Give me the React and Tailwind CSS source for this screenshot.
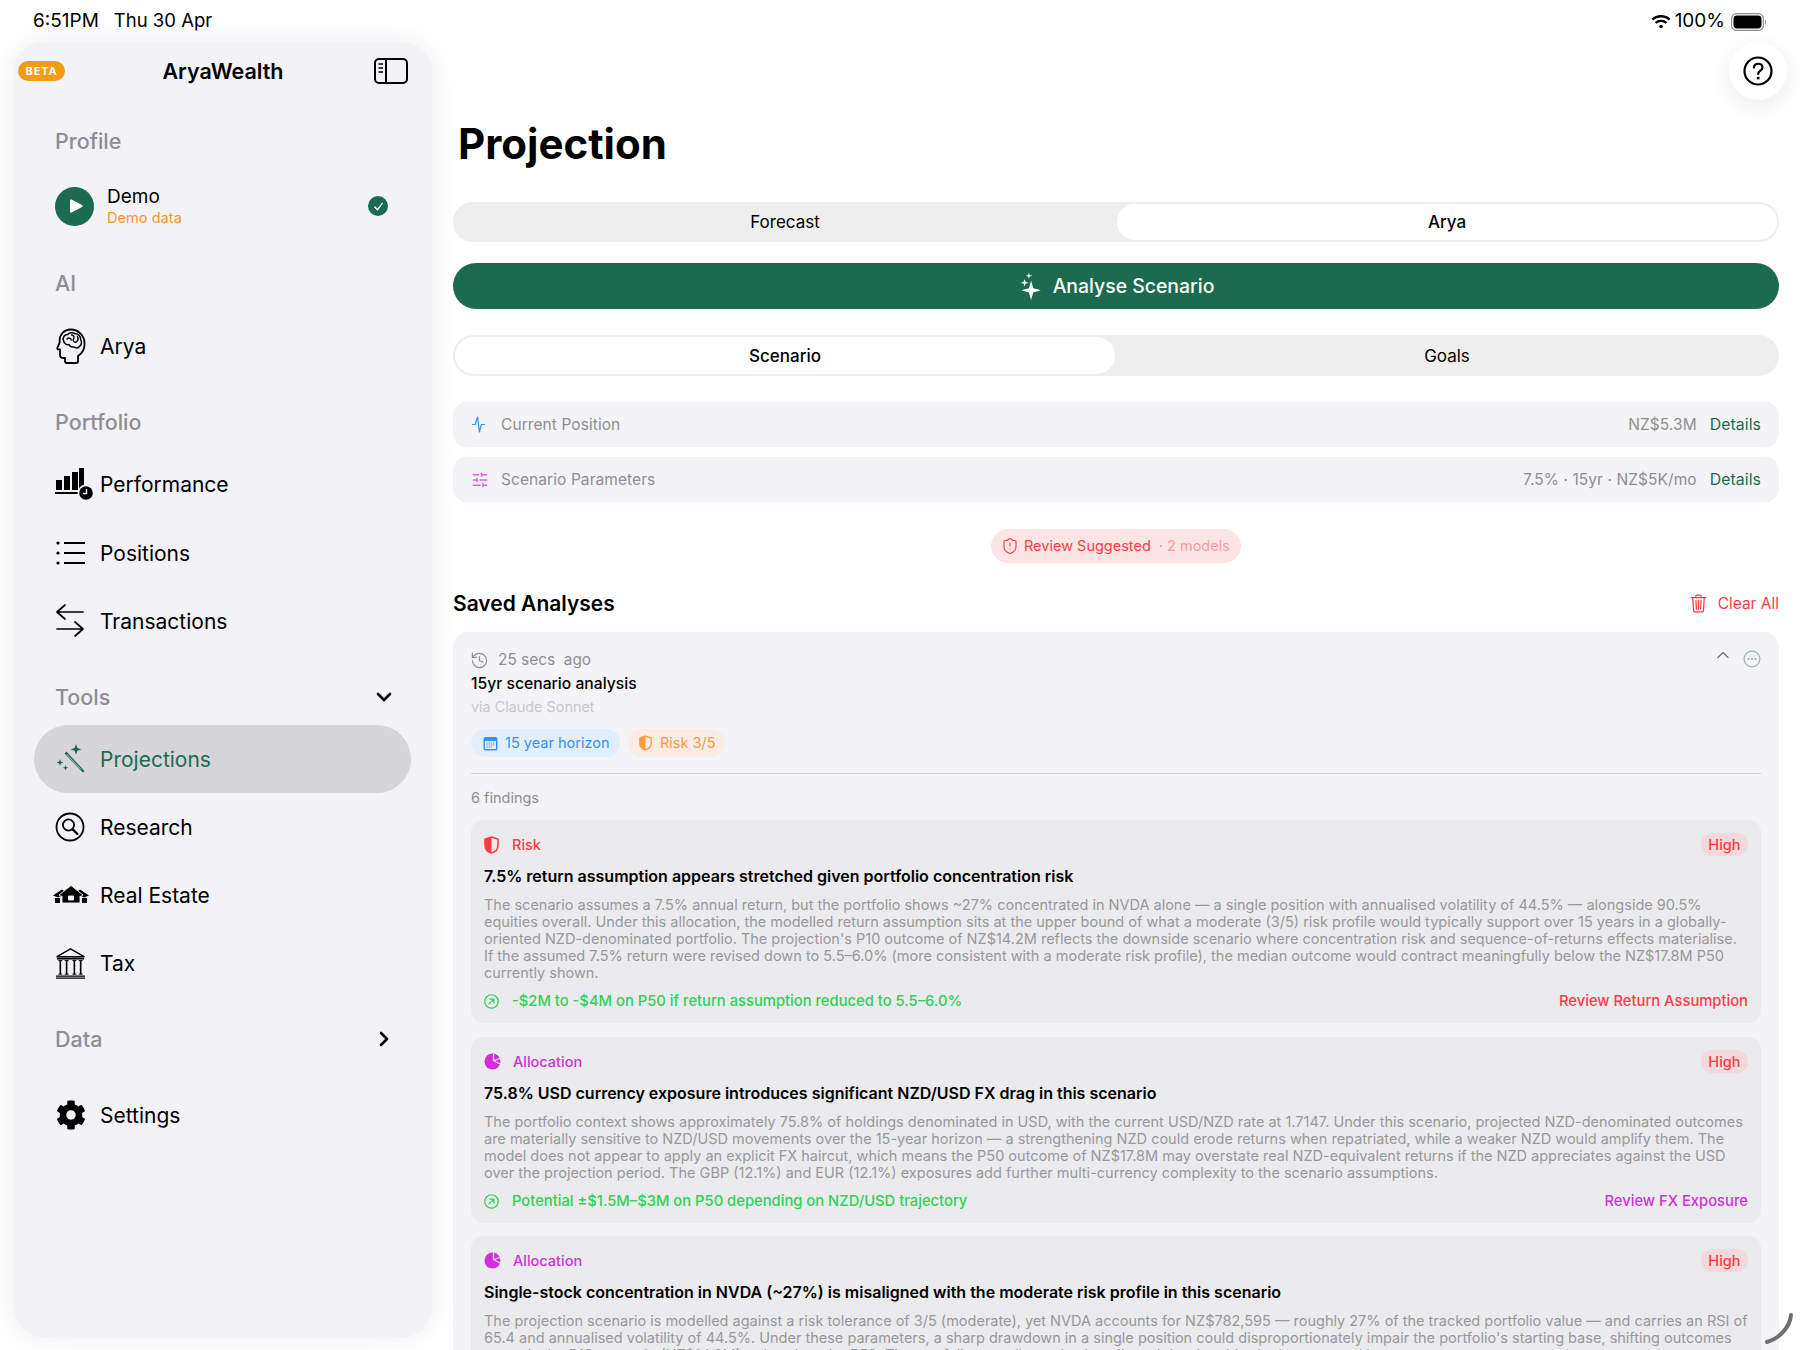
import { ChevronDown, ChevronRight, ChevronUp, History, ShieldAlert, SlidersHorizontal } from 'lucide-react';
import { FaCog } from 'react-icons/fa';

const findings = [
  {
    kind: 'Risk',
    color: 'text-[#ff3b47]',
    icon: <HalfShield className="w-[15px] h-[18px] text-[#ff3b47]" />,
    gap: 'ml-[13px]',
    title: '7.5% return assumption appears stretched given portfolio concentration risk',
    body: [
      'The scenario assumes a 7.5% annual return, but the portfolio shows ~27% concentrated in NVDA alone — a single position with annualised volatility of 44.5% — alongside 90.5%',
      'equities overall. Under this allocation, the modelled return assumption sits at the upper bound of what a moderate (3/5) risk profile would typically support over 15 years in a globally-',
      "oriented NZD-denominated portfolio. The projection's P10 outcome of NZ$14.2M reflects the downside scenario where concentration risk and sequence-of-returns effects materialise.",
      'If the assumed 7.5% return were revised down to 5.5–6.0% (more consistent with a moderate risk profile), the median outcome would contract meaningfully below the NZ$17.8M P50',
      'currently shown.',
    ],
    impact: '-$2M to -$4M on P50 if return assumption reduced to 5.5–6.0%',
    action: 'Review Return Assumption',
  },
  {
    kind: 'Allocation',
    color: 'text-[#d02fe0]',
    icon: <PieFilled />,
    gap: 'ml-[12px]',
    title: '75.8% USD currency exposure introduces significant NZD/USD FX drag in this scenario',
    body: [
      'The portfolio context shows approximately 75.8% of holdings denominated in USD, with the current USD/NZD rate at 1.7147. Under this scenario, projected NZD-denominated outcomes',
      'are materially sensitive to NZD/USD movements over the 15-year horizon — a strengthening NZD could erode returns when repatriated, while a weaker NZD would amplify them. The',
      'model does not appear to apply an explicit FX haircut, which means the P50 outcome of NZ$17.8M may overstate real NZD-equivalent returns if the NZD appreciates against the USD',
      'over the projection period. The GBP (12.1%) and EUR (12.1%) exposures add further multi-currency complexity to the scenario assumptions.',
    ],
    impact: 'Potential ±$1.5M–$3M on P50 depending on NZD/USD trajectory',
    action: 'Review FX Exposure',
  },
  {
    kind: 'Allocation',
    color: 'text-[#d02fe0]',
    icon: <PieFilled />,
    gap: 'ml-[12px]',
    title: 'Single-stock concentration in NVDA (~27%) is misaligned with the moderate risk profile in this scenario',
    body: [
      'The projection scenario is modelled against a risk tolerance of 3/5 (moderate), yet NVDA accounts for NZ$782,595 — roughly 27% of the tracked portfolio value — and carries an RSI of',
      "65.4 and annualised volatility of 44.5%. Under these parameters, a sharp drawdown in a single position could disproportionately impair the portfolio's starting base, shifting outcomes",
      'towards the P10 scenario (NZ$14.2M) rather than the P50. The portfolio overall remains heavily weighted to this single name and its sector.',
    ],
  },
];

function HalfShield({ className }) {
  return (
    <svg viewBox="0 0 15 18" className={className} fill="none">
      <path d="M7.5 1 L14 3.2 V9 C14 13 11 16 7.5 17 C4 16 1 13 1 9 V3.2 Z" stroke="currentColor" strokeWidth="1.6" strokeLinejoin="round" />
      <path d="M7.5 1 L1 3.2 V9 C1 13 4 16 7.5 17 Z" fill="currentColor" />
    </svg>
  );
}

function PieFilled() {
  return (
    <svg viewBox="0 0 17 17" className="w-[17px] h-[17px]">
      <circle cx="8.5" cy="8.5" r="8" fill="#d02fe0" />
      <path d="M9.5 1 L9.5 7.5 L16 5.5 M9.5 7.5 L16 11" stroke="#ebebed" strokeWidth="1.2" fill="none" />
    </svg>
  );
}

function BrainHead() {
  return (
    <svg viewBox="0 0 30 36" className="w-[30px] h-[36px]" fill="none" stroke="#000" strokeWidth="1.8" strokeLinejoin="round" strokeLinecap="round">
      <path d="M9 30 V33 C9 34.2 10 35 11 35 H20 C21.2 35 22 34.2 22 33 V28 C26 25.5 28.6 21.4 28.6 16 C28.6 7.6 22.4 1.5 14.8 1.5 C8 1.5 3.6 6.6 3.6 12.4 V14.6 L1.4 19.6 C1 20.6 1.6 21.4 2.6 21.4 H4 V26.4 C4 28.6 5.4 30 7.4 30 Z" />
      <path d="M7.6 13 C6.2 9.6 8.6 6.4 11.6 6.6 C13 4.6 17 4.2 19 5.8 C22.4 5.6 25 8.6 24.6 11.6 C26.4 14 25.4 17.4 23.4 18.4 C22 20 19.6 20.2 18 19 C15.6 19.4 13.6 18.2 13 16.6 C10.6 17.2 8.2 15.6 7.6 13 Z" strokeWidth="1.5" />
      <path d="M11 11 C12.6 9.4 14.8 10 15.4 12 M15.6 7 C18 7.2 18.6 9.4 17.4 11.4 C16.6 13 18.4 14.8 20.4 14 M21.4 8.4 C22.4 10 22.2 12 21 13.4" strokeWidth="1.4" />
    </svg>
  );
}

function PerfIcon() {
  return (
    <svg viewBox="0 0 40 34" className="w-[40px] h-[34px] -ml-px">
      <rect x="1" y="13" width="6" height="10" />
      <rect x="9" y="9" width="6" height="14" />
      <rect x="17" y="5" width="6" height="18" />
      <rect x="24" y="1" width="5" height="22" />
      <rect x="0" y="25" width="23" height="2" />
      <circle cx="31" cy="26" r="8.5" fill="#f2f2f7" />
      <circle cx="31" cy="26" r="6.8" />
      <path d="M31.5 22 V26.5 H28" stroke="#f2f2f7" strokeWidth="1.4" fill="none" />
    </svg>
  );
}

function ListIcon() {
  return (
    <svg viewBox="0 0 32 26" className="w-[32px] h-[26px] -ml-px" stroke="#000" strokeWidth="1.8">
      <circle cx="3" cy="3" r="1.6" stroke="none" />
      <circle cx="3" cy="13" r="1.6" stroke="none" />
      <circle cx="3" cy="23" r="1.6" stroke="none" />
      <path d="M9 3 H30 M9 13 H30 M9 23 H30" />
    </svg>
  );
}

function SwapIcon() {
  return (
    <svg viewBox="0 0 30 36" className="w-[30px] h-[36px] -ml-px" fill="none" stroke="#000" strokeWidth="1.7" strokeLinecap="round" strokeLinejoin="round">
      <path d="M2 9 H28 M10 2 L2 9 L10 16" />
      <path d="M2 26 H28 M20 19 L28 26 L20 33" />
    </svg>
  );
}

function WandIcon() {
  return (
    <svg viewBox="0 0 30 32" className="w-[30px] h-[32px]" fill="#1c6b51">
      <path d="M8.5 10.5 L10.5 8.5 L28 27.5 C28.6 28.6 27.6 29.8 26.3 29 Z" />
      <path d="M10.5 11 L25 26.5" stroke="#d4d4d8" strokeWidth="0.8" />
      <path d="M20 1 L21.4 5 L25.4 6.4 L21.4 7.8 L20 11.8 L18.6 7.8 L14.6 6.4 L18.6 5 Z" />
      <path d="M4 16 L4.9 18.6 L7.5 19.5 L4.9 20.4 L4 23 L3.1 20.4 L0.5 19.5 L3.1 18.6 Z" />
      <path d="M9.5 22 L10.2 24 L12.2 24.7 L10.2 25.4 L9.5 27.4 L8.8 25.4 L6.8 24.7 L8.8 24 Z" />
    </svg>
  );
}

function SearchRing() {
  return (
    <svg viewBox="0 0 30 30" className="w-[30px] h-[30px] -ml-px" fill="none" stroke="#000" strokeWidth="1.8" strokeLinecap="round">
      <circle cx="15" cy="15" r="13.5" />
      <circle cx="13.5" cy="13" r="5.6" />
      <path d="M17.8 17.4 L22.4 22" strokeWidth="2.2" />
    </svg>
  );
}

function HomesIcon() {
  return (
    <svg viewBox="0 0 36 20" className="w-[36px] h-[20px] -ml-[3px]">
      <path d="M0 10.5 L9 4.5 L14 8 L5 12.5 Z" />
      <path d="M36 10.5 L27 4.5 L22 8 L31 12.5 Z" />
      <path d="M2 13 H7 V18 H2 Z M29 13 H34 V18 H29 Z" />
      <path fillRule="evenodd" d="M18 0.5 L30 10 L27.6 11.4 L27 11 V18 H9 V11 L8.4 11.4 L6 10 Z M15.5 11 V15 H20.5 V11 Z" stroke="#f2f2f7" strokeWidth="0.9" />
    </svg>
  );
}

function BankIcon() {
  return (
    <svg viewBox="0 0 32 32" className="w-[31px] h-[31px] -ml-px" fill="none" stroke="#000" strokeWidth="1.4">
      <path d="M16 1 L30 9 H2 Z" strokeWidth="1.5" strokeLinejoin="round" />
      <path d="M2 11 H30" strokeWidth="1.8" />
      <path d="M5.5 13 V27 M12 13 V27 M20 13 V27 M26.5 13 V27" strokeWidth="1.7" />
      <path d="M3.5 13 H7.5 M10 13 H14 M18 13 H22 M24.5 13 H28.5 M3.5 27 H7.5 M10 27 H14 M18 27 H22 M24.5 27 H28.5" strokeWidth="1" />
      <path d="M1 29 H31 M1 31 H31" strokeWidth="1.3" />
    </svg>
  );
}

function SectionLabel({ children, className = '', right }) {
  return (
    <div className={`flex items-center justify-between h-[40px] pl-[41px] pr-[36px] ${className}`}>
      <span className="text-[21.5px] font-medium text-[#8e8e93]">{children}</span>
      {right}
    </div>
  );
}

function NavRow({ icon, label, active }) {
  return (
    <div className={`flex items-center h-[68px] ml-[20px] mr-[21px] pl-[22px] rounded-full ${active ? 'bg-[#d5d5da] text-[#1c6b51]' : 'text-black'}`}>
      <div className="w-[44px] flex items-center">{icon}</div>
      <span className="pt-[2px] text-[21px]">{label}</span>
    </div>
  );
}

function Sidebar() {
  return (
    <aside className="ml-[14px] w-[418px] h-[1295px] shrink-0 rounded-[30px] bg-[#f2f2f7] shadow-[0_0_30px_rgba(0,0,0,0.07)]">
      <div className="relative flex items-center justify-center h-[58px]">
        <span className="absolute left-[4px] top-[19px] flex items-center justify-center w-[47px] h-[20px] rounded-full bg-[#f39c12] text-white text-[11px] font-bold tracking-[0.08em]">BETA</span>
        <span className="text-[21.5px] font-semibold">AryaWealth</span>
        <svg viewBox="0 0 34 26" className="absolute left-[360px] top-[16px] w-[34px] h-[26px]" fill="none" stroke="#000" strokeWidth="2">
          <rect x="1" y="1" width="32" height="24" rx="4" />
          <path d="M12 1 V25" />
          <path d="M4.5 6 H9 M4.5 10 H9 M4.5 14 H9" strokeWidth="1.6" />
        </svg>
      </div>

      <SectionLabel className="mt-[21px]">Profile</SectionLabel>
      <div className="flex items-center h-[68px] mt-[11px] pl-[41px] pr-[44px]">
        <div className="flex items-center justify-center w-[39px] h-[39px] rounded-full bg-[#1c6b51]">
          <svg viewBox="0 0 14 14" className="w-[14px] h-[14px] ml-[2px]" fill="#fff">
            <path d="M1 1.5 C1 0.6 1.9 0.2 2.6 0.6 L13 6.1 C13.8 6.5 13.8 7.5 13 7.9 L2.6 13.4 C1.9 13.8 1 13.4 1 12.5 Z" />
          </svg>
        </div>
        <div className="ml-[13px] flex-1 pt-[2px]">
          <div className="text-[19px] leading-[22px]">Demo</div>
          <div className="text-[14.6px] leading-[20px] text-[#ff9233]">Demo data</div>
        </div>
        <div className="flex items-center justify-center w-[20px] h-[20px] rounded-full bg-[#1c6b51]">
          <svg viewBox="0 0 12 12" className="w-[11px] h-[11px]" fill="none" stroke="#fff" strokeWidth="1.5" strokeLinecap="round" strokeLinejoin="round">
            <path d="M2 6.5 L5 9.5 L10 2.5" />
          </svg>
        </div>
      </div>

      <SectionLabel className="mt-[23px]">AI</SectionLabel>
      <div className="mt-[9px]"><NavRow icon={<BrainHead />} label="Arya" /></div>

      <SectionLabel className="mt-[22px]">Portfolio</SectionLabel>
      <div className="mt-[8px]">
        <NavRow icon={<PerfIcon />} label="Performance" />
        <div className="mt-px"><NavRow icon={<ListIcon />} label="Positions" /></div>
        <NavRow icon={<SwapIcon />} label="Transactions" />
      </div>

      <SectionLabel className="mt-[22px]" right={<ChevronDown size={24} strokeWidth={2.6} />}>Tools</SectionLabel>
      <div className="mt-[8px]">
        <NavRow active icon={<WandIcon />} label="Projections" />
        <NavRow icon={<SearchRing />} label="Research" />
        <NavRow icon={<HomesIcon />} label="Real Estate" />
        <NavRow icon={<BankIcon />} label="Tax" />
      </div>

      <SectionLabel className="mt-[22px]" right={<ChevronRight size={24} strokeWidth={2.6} />}>Data</SectionLabel>
      <div className="mt-[22px]">
        <NavRow icon={<FaCog className="w-[30px] h-[30px]" />} label="Settings" />
      </div>
    </aside>
  );
}

function Segmented({ left, right, active, height }) {
  const pill = 'bg-white rounded-full';
  return (
    <div className={`flex p-[2px] rounded-full bg-[#eeeeee] text-[17px] ${height}`}>
      <div className={`flex-1 flex items-center justify-center pt-[2px] ${active === 0 ? `${pill} font-medium` : ''}`}>{left}</div>
      <div className={`flex-1 flex items-center justify-center pt-[2px] ml-[2px] ${active === 1 ? `${pill} font-medium` : ''}`}>{right}</div>
    </div>
  );
}

function InfoRow({ icon, label, value, className = '' }) {
  return (
    <div className={`flex items-center h-[45px] pl-[18px] pr-[18px] rounded-[14px] bg-[#f4f4f6] text-[15.5px] tracking-[0.005em] ${className}`}>
      <div className="w-[30px]">{icon}</div>
      <span className="text-[#8e8e93]">{label}</span>
      <span className="ml-auto text-[#8e8e93]">{value}</span>
      <span className="ml-[13px] text-[15.8px] text-[#1c6b51]">Details</span>
    </div>
  );
}

function Finding({ f, className = '' }) {
  return (
    <div className={`rounded-[12px] bg-[#ebebed] pt-[13px] pb-[12px] px-[13px] ${className}`}>
      <div className="flex items-center justify-between h-[23px]">
        <div className="flex items-center">
          {f.icon}
          <span className={`${f.gap} text-[14.5px] font-medium ${f.color}`}>{f.kind}</span>
        </div>
        <span className="flex items-center h-[23px] px-[7.5px] rounded-full bg-[#f2d9dc] text-[#ff3b47] text-[14.5px] font-medium">High</span>
      </div>
      <div className="mt-[9px] text-[16px] leading-[22px] font-semibold whitespace-nowrap">{f.title}</div>
      <div className="mt-[9px] text-[14.5px] leading-[17px] text-[#98989d] whitespace-nowrap">
        {f.body.map((line) => <div key={line}>{line}</div>)}
      </div>
      {f.impact && (
        <div className="flex items-center justify-between h-[20px] mt-[10px] text-[14.75px] font-medium">
          <div className="flex items-center text-[#30d158]">
            <svg viewBox="0 0 16 16" className="w-[15px] h-[15px] mr-[13px]" fill="none" stroke="currentColor" strokeWidth="1.3" strokeLinecap="round" strokeLinejoin="round">
              <circle cx="8" cy="8" r="7.2" />
              <path d="M5.5 10.5 L10.5 5.5 M6.5 5.5 H10.5 V9.5" />
            </svg>
            {f.impact}
          </div>
          <span className={f.color}>{f.action}</span>
        </div>
      )}
    </div>
  );
}

function Main() {
  return (
    <main className="ml-[21px] w-[1326px] shrink-0">
      <h1 className="pl-[5px] pt-[74px] text-[42px] leading-[56px] font-bold">Projection</h1>
      <Segmented left="Forecast" right="Arya" active={1} height="h-[40px] mt-[30px]" />
      <button className="flex items-center justify-center w-full h-[46px] mt-[21px] rounded-full bg-[#1c6b51] text-white text-[19.4px] font-medium">
        <svg viewBox="0 0 22 26" className="w-[24px] h-[28px] mr-[11px]" fill="#fff">
          <path d="M12 8 L14 15 L21 17 L14 19 L12 26 L10 19 L3 17 L10 15 Z" />
          <path d="M6 6.5 L6.9 9.1 L9.5 10 L6.9 10.9 L6 13.5 L5.1 10.9 L2.5 10 L5.1 9.1 Z" />
          <path d="M10 0.5 L10.7 2.8 L13 3.5 L10.7 4.2 L10 6.5 L9.3 4.2 L7 3.5 L9.3 2.8 Z" />
        </svg>
        <span className="pt-[2px]">Analyse Scenario</span>
      </button>
      <Segmented left="Scenario" right="Goals" active={0} height="h-[41px] mt-[26px]" />

      <InfoRow
        className="mt-[26px]"
        label="Current Position"
        value="NZ$5.3M"
        icon={
          <svg viewBox="0 0 16 20" className="w-[15px] h-[19px]" fill="none" stroke="#2f95f5" strokeWidth="1.3" strokeLinejoin="round">
            <path d="M1 10 H4.5 L7 2 L9 18 L11 10 H15" />
          </svg>
        }
      />
      <InfoRow
        className="mt-[10px]"
        label="Scenario Parameters"
        value="7.5% · 15yr · NZ$5K/mo"
        icon={<SlidersHorizontal size={18} strokeWidth={1.8} className="text-[#e05ee0]" />}
      />

      <div className="flex justify-center mt-[27px]">
        <div className="flex items-center h-[34px] w-[250px] pl-[10px] rounded-full bg-[#fde5e5] text-[14.5px] text-[#ff3b47]">
          <ShieldAlert size={18} strokeWidth={1.5} className="mr-[5px]" />
          Review Suggested
          <span className="ml-[8px] text-[#ff9aa0]">· 2 models</span>
        </div>
      </div>

      <div className="flex items-center justify-between h-[30px] mt-[25px]">
        <h2 className="pt-px text-[21px] font-semibold">Saved Analyses</h2>
        <div className="flex items-center pt-px text-[15.5px] text-[#ff3b47]">
          <svg viewBox="0 0 16 18" className="w-[17px] h-[19px] mr-[11px]" fill="none" stroke="currentColor" strokeWidth="1.2" strokeLinecap="round">
            <path d="M1 3.5 H15 M5.5 3.5 V2 C5.5 1.4 6 1 6.5 1 H9.5 C10 1 10.5 1.4 10.5 2 V3.5" />
            <path d="M2.5 3.5 L3.4 16 C3.5 16.6 4 17 4.5 17 H11.5 C12 17 12.5 16.6 12.6 16 L13.5 3.5" />
            <path d="M5.6 6 L6 14.5 M8 6 V14.5 M10.4 6 L10 14.5" />
          </svg>
          Clear All
        </div>
      </div>

      <section className="mt-[14px] rounded-t-[16px] bg-[#f4f4f6] px-[18px] pt-[18px] pb-[20px]">
        <div className="flex justify-between">
          <div>
            <div className="flex items-center h-[20px] text-[15.4px] text-[#8e8e93]">
              <History size={19} strokeWidth={1.5} className="mr-[9px] -ml-px" />
              <span>25 secs&nbsp; ago</span>
            </div>
            <div className="mt-[4px] h-[20px] text-[15.7px] font-medium leading-[20px]">15yr scenario analysis</div>
            <div className="mt-[4px] h-[18px] text-[14.4px] leading-[18px] text-[#c7c7cc]">via Claude Sonnet</div>
          </div>
          <div className="flex items-start">
            <ChevronUp size={20} strokeWidth={1.5} className="text-[#6e6e73] mr-[10px] -mt-[5px]" />
            <svg viewBox="0 0 18 18" className="w-[18px] h-[18px]" fill="#7fae9c" stroke="none">
              <circle cx="9" cy="9" r="7.9" fill="none" stroke="#8fb8a8" strokeWidth="1.2" />
              <circle cx="5.5" cy="9" r="1" />
              <circle cx="9" cy="9" r="1" />
              <circle cx="12.5" cy="9" r="1" />
            </svg>
          </div>
        </div>
        <div className="flex mt-[13px] text-[14.5px]">
          <div className="flex items-center h-[28px] w-[149px] pl-[12px] rounded-full bg-[#e3eefa] text-[#2f95f5]">
            <svg viewBox="0 0 15 15" className="w-[15px] h-[15px] mr-[7px]">
              <rect x="0.5" y="1" width="14" height="13.5" rx="2" fill="#2f95f5" />
              <rect x="2" y="5" width="11" height="8" fill="#e3eefa" />
              <path d="M3.5 7 H11.5 M3.5 9 H11.5 M3.5 11 H9" stroke="#2f95f5" strokeWidth="1" strokeDasharray="1.2 1" />
            </svg>
            15 year horizon
          </div>
          <div className="flex items-center h-[28px] w-[97px] ml-[8px] pl-[11px] rounded-full bg-[#f7ede6] text-[#ff9a3c]">
            <HalfShield className="w-[13px] h-[16px] mr-[8px]" />
            Risk 3/5
          </div>
        </div>
        <div className="mt-[16px] h-px bg-[#d1d1d6]" />
        <div className="mt-[14px] h-[20px] text-[14.5px] leading-[20px] text-[#8e8e93]">6 findings</div>
        <div className="mt-[12px]">
          <Finding f={findings[0]} />
          <Finding f={findings[1]} className="mt-[14px]" />
          <Finding f={findings[2]} className="mt-[13px]" />
        </div>
      </section>
    </main>
  );
}

export default function App() {
  return (
    <div className="relative w-[1800px] h-[1350px] overflow-hidden bg-white text-black font-['Inter',sans-serif]">
      <div className="relative flex items-center justify-between h-[42px] pt-px pl-[33px] pr-[33px] z-10">
        <div className="flex text-[18.5px]">
          <span className="text-[19px]">6:51PM</span>
          <span className="ml-[15px]">Thu 30 Apr</span>
        </div>
        <div className="flex items-center text-[19px]">
          <svg viewBox="0 0 22 16" className="w-[20px] h-[15px] mr-[4px]" fill="none" stroke="#000" strokeWidth="2.6">
            <path d="M1.5 6 C6.5 1 15.5 1 20.5 6 M5 9.6 C8.2 6.6 13.8 6.6 17 9.6" />
            <circle cx="11" cy="13.5" r="2" fill="#000" stroke="none" />
          </svg>
          <span>100%</span>
          <svg viewBox="0 0 36 18" className="w-[36px] h-[18px] ml-[6px]">
            <rect x="0.6" y="0.6" width="31.8" height="16.8" rx="5" fill="none" stroke="#8e8e93" strokeWidth="1.2" />
            <rect x="2.5" y="2.5" width="28" height="13" rx="3.4" />
            <path d="M34 6 C35.2 6.5 35.2 11.5 34 12 Z" fill="#8e8e93" />
          </svg>
        </div>
      </div>
      <div className="flex">
        <Sidebar />
        <Main />
      </div>
      <div className="absolute left-[1729px] top-[42px] flex items-center justify-center w-[58px] h-[58px] rounded-full bg-white shadow-[0_6px_24px_rgba(0,0,0,0.08)]">
        <svg viewBox="0 0 30 30" className="w-[30px] h-[30px]" fill="none" stroke="#000" strokeWidth="2.2" strokeLinecap="round">
          <circle cx="15" cy="15" r="13.5" />
          <path d="M11 11.5 C11 6.5 19.5 6.5 19.5 11.5 C19.5 14.5 15.2 14.8 15.2 18" />
          <circle cx="15.2" cy="22" r="1.5" fill="#000" stroke="none" />
        </svg>
      </div>
      <svg viewBox="0 0 30 34" className="absolute left-[1764px] top-[1312px] w-[30px] h-[34px]" fill="none" stroke="#6e6e73" strokeWidth="4" strokeLinecap="round">
        <path d="M27 3 C26 15 15 27 3 30" />
      </svg>
    </div>
  );
}
